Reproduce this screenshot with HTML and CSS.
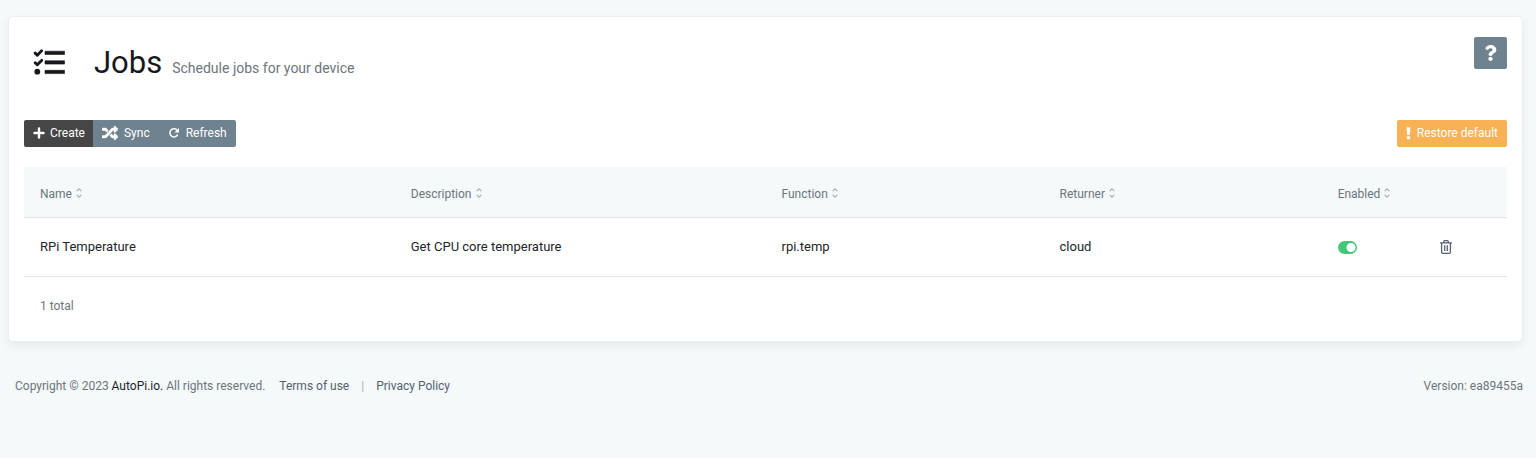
FILE: index.html
```html
<!DOCTYPE html>
<html lang="en">
<head>
<meta charset="utf-8">
<meta name="viewport" content="width=device-width, initial-scale=1">
<title>Jobs</title>
<link rel="stylesheet" href="styles.css">
</head>
<body>
<svg class="sprite" aria-hidden="true">
  <symbol id="sort" viewBox="0 0 6 10">
    <path d="M.7 3.1 3 .9l2.3 2.2M.7 6.9 3 9.1l2.3-2.2" fill="none" stroke="currentColor" stroke-width="1.3"/>
  </symbol>
</svg>
<main class="card">
  <header class="card-header">
    <svg class="title-icon" viewBox="0 0 32 26" aria-hidden="true">
      <path d="M2.200 4.100 4.300 6.200 8.600 1.800M2.200 13.700 4.300 15.800 8.600 11.400" fill="none" stroke="currentColor" stroke-width="2.900" stroke-linecap="round" stroke-linejoin="round"/>
      <circle cx="4.300" cy="22.700" r="2.900" fill="currentColor"/>
      <path d="M12 2.200h19.500v3.300H12zM12 11.800h19.500v3.300H12zM12 21.300h19.500v3.300H12z" fill="currentColor" stroke="currentColor" stroke-width=".6" stroke-linejoin="round"/>
    </svg>
    <h1 class="title">Jobs</h1>
    <p class="subtitle">Schedule jobs for your device</p>
    <button class="help" type="button" aria-label="Help">
      <svg class="help-icon" viewBox="0 0 384 512" aria-hidden="true"><path fill="currentColor" d="M202.021 0C122.202 0 70.503 32.703 29.914 91.026c-7.363 10.58-5.093 25.086 5.178 32.874l43.138 32.709c10.373 7.865 25.132 6.026 33.253-4.148 25.049-31.381 43.63-49.449 82.757-49.449 30.764 0 68.816 19.799 68.816 49.631 0 22.552-18.617 34.134-48.993 51.164-35.423 19.86-82.299 44.576-82.299 106.405V320c0 13.255 10.745 24 24 24h72.471c13.255 0 24-10.745 24-24v-5.773c0-42.86 125.268-44.645 125.268-160.627C377.504 66.256 286.902 0 202.021 0zM192 373.459c-38.196 0-69.271 31.075-69.271 69.271 0 38.195 31.075 69.27 69.271 69.27s69.271-31.075 69.271-69.271-31.075-69.27-69.271-69.27z"/></svg>
    </button>
  </header>

  <div class="toolbar">
    <div class="button-group">
      <button class="button button-dark" type="button">
        <svg class="icon-plus" viewBox="0 0 12 12" aria-hidden="true"><path d="M6 1.500v9M1.500 6h9" stroke="currentColor" stroke-width="2.400" stroke-linecap="round"/></svg>
        Create
      </button>
      <button class="button" type="button">
        <svg class="icon-shuffle" viewBox="0 0 512 512" aria-hidden="true"><path fill="currentColor" stroke="currentColor" stroke-width="12" d="M504.971 359.029c9.373 9.373 9.373 24.569 0 33.941l-80 79.984c-15.01 15.01-40.971 4.49-40.971-16.971V416h-58.785a12.004 12.004 0 0 1-8.773-3.812l-70.556-75.596 53.333-57.143L352 336h32v-39.981c0-21.438 25.943-31.998 40.971-16.971l80 79.981zM12 176h84l52.781 56.551 53.333-57.143-70.556-75.596A11.999 11.999 0 0 0 122.785 96H12c-6.627 0-12 5.373-12 12v56c0 6.627 5.373 12 12 12zm372 0v39.984c0 21.46 25.961 31.98 40.971 16.971l80-79.984c9.373-9.373 9.373-24.569 0-33.941l-80-79.981C409.943 24.021 384 34.582 384 56.019V96h-58.785a12.004 12.004 0 0 0-8.773 3.812L96 336H12c-6.627 0-12 5.373-12 12v56c0 6.627 5.373 12 12 12h110.785c3.326 0 6.503-1.381 8.773-3.812L352 176h32z"/></svg>
        Sync
      </button>
      <button class="button" type="button">
        <svg class="icon-refresh" viewBox="0 0 12 12" aria-hidden="true"><path d="M8.900 2.900A4.100 4.100 0 1 0 9.700 7.600" fill="none" stroke="currentColor" stroke-width="1.500"/><path d="M11 .9v4.600H6.300z" fill="currentColor"/></svg>
        Refresh
      </button>
    </div>
    <button class="button button-warning" type="button">
      <svg class="icon-bang" viewBox="0 0 5 13" aria-hidden="true"><path d="M.6.8Q.6.300 1.100.3h2.800q.5 0 .5.5L3.900 7.600q0 .4-.5.4H1.600q-.5 0-.5-.4z" fill="currentColor"/><circle cx="2.500" cy="10.800" r="1.800" fill="currentColor"/></svg>
      Restore default
    </button>
  </div>

  <table class="jobs">
    <colgroup><col class="col-wide"><col class="col-wide"><col class="col-mid"><col class="col-mid"><col class="col-enabled"><col></colgroup>
    <thead>
      <tr>
        <th scope="col">Name<svg class="sort"><use href="#sort"/></svg></th>
        <th scope="col">Description<svg class="sort"><use href="#sort"/></svg></th>
        <th scope="col">Function<svg class="sort"><use href="#sort"/></svg></th>
        <th scope="col">Returner<svg class="sort"><use href="#sort"/></svg></th>
        <th scope="col">Enabled<svg class="sort"><use href="#sort"/></svg></th>
        <td></td>
      </tr>
    </thead>
    <tbody>
      <tr>
        <td>RPi Temperature</td>
        <td>Get CPU core temperature</td>
        <td>rpi.temp</td>
        <td>cloud</td>
        <td><input class="toggle" type="checkbox" aria-label="Enabled" checked></td>
        <td>
          <button class="delete" type="button" aria-label="Delete job">
            <svg class="icon-trash" viewBox="0 0 12 14" aria-hidden="true"><path d="M0 2.800h12M3.700 2.500V1.700Q3.700.700 4.700.7h2.600q1 0 1 1v.8M1.600 3v9.300q0 1 1 1h6.800q1 0 1-1V3M4.700 5.200v5.800M7.300 5.200v5.800" fill="none" stroke="currentColor" stroke-width="1.300"/></svg>
          </button>
        </td>
      </tr>
    </tbody>
  </table>
  <p class="total">1 total</p>
</main>
<footer class="footer">
  <span>Copyright © 2023 <a class="brand" href="#">AutoPi.io.</a> All rights reserved.</span>
  <a class="terms" href="#">Terms of use</a>
  <span class="divider">|</span>
  <a href="#">Privacy Policy</a>
  <span class="version">Version: ea89455a</span>
</footer>
</body>
</html>
```
FILE: styles.css
```css
* { box-sizing: border-box; }
body {
  margin: 0;
  padding: 16px 13px 0 8px;
  background: #f5f9fa;
  color: #212529;
  font: 13px/20px Roboto, sans-serif;
}
h1, p { margin: 0; }
button { border: 0; font: inherit; cursor: pointer; }
a { color: #536170; text-decoration: none; }
.sprite { display: none; }

.card {
  padding: 20px 15px 25px;
  border: 1px solid #eceff1;
  border-radius: 5px;
  background: #fff;
  box-shadow: 0 4px 10px rgba(0, 0, 0, .06);
}
.card-header { display: flex; align-items: baseline; height: 83px; }
.title-icon { align-self: flex-start; width: 32px; height: 26px; margin: 12px 29px 0 9px; color: #16181b; }
.title { margin-right: 10px; color: #16181b; font-size: 31px; line-height: 52px; font-weight: 400; }
.subtitle { color: #6c757d; font-size: 14px; }
.help {
  display: grid;
  place-items: center;
  align-self: flex-start;
  width: 33px;
  height: 32px;
  margin-left: auto;
  padding: 0;
  border-radius: 2px;
  background: #6f8290;
  color: #fff;
}
.help-icon { width: 13px; height: 16px; }

.toolbar { display: flex; justify-content: space-between; }
.button-group { display: flex; border-radius: 2px; overflow: hidden; }
.button {
  display: flex;
  align-items: center;
  height: 27px;
  padding: 0 9px 1px;
  background: #6f8290;
  color: #fff;
  font-size: 12px;
}
.button-dark { padding-right: 8px; background: #464646; }
.button-warning { border-radius: 2px; background: #f8b154; }
.icon-plus { width: 12px; height: 12px; margin-right: 5px; }
.icon-shuffle { width: 16px; height: 16px; margin-right: 6px; }
.icon-refresh { width: 12px; height: 12px; margin-right: 6px; }
.icon-bang { width: 5px; height: 13px; margin-right: 6px; }

.jobs { width: 100%; margin-top: 20px; border-collapse: collapse; table-layout: fixed; }
.col-wide { width: 25%; }
.col-mid { width: 18.75%; }
.col-enabled { width: 6.9%; }
.jobs th, .jobs td { padding: 0 16px; border-bottom: 1px solid #e4e7ea; text-align: left; }
.jobs thead tr { height: 50px; background: #f5f9fa; }
.jobs th { padding-top: 4px; color: #6c757d; font-size: 12px; font-weight: 400; white-space: nowrap; }
.jobs tbody tr { height: 59px; }
.jobs tbody td { padding-top: 1px; }
.sort { width: 6px; height: 10px; margin-left: 4px; color: #a9b1b7; }
.toggle {
  appearance: none;
  display: block;
  width: 19px;
  height: 13px;
  margin: 0;
  border-radius: 7px;
  background: radial-gradient(circle at 13px 50%, #fff 4px, transparent 5px) #40c878;
}
.toggle:not(:checked) { background: radial-gradient(circle at 6px 50%, #fff 4px, transparent 5px) #a9b1b7; }
.delete { display: block; padding: 0; background: none; color: #536170; }
.icon-trash { display: block; width: 12px; height: 14px; }
.total { padding: 19px 16px 0; color: #6c757d; font-size: 12px; }

.footer {
  display: flex;
  padding: 34px 0 12px 7px;
  color: #6c757d;
  font-size: 12px;
}
.brand { color: #212529; }
.terms { margin-left: 14px; }
.divider { margin: 0 12px; color: #a9b1b7; }
.version { margin-left: auto; }
```
